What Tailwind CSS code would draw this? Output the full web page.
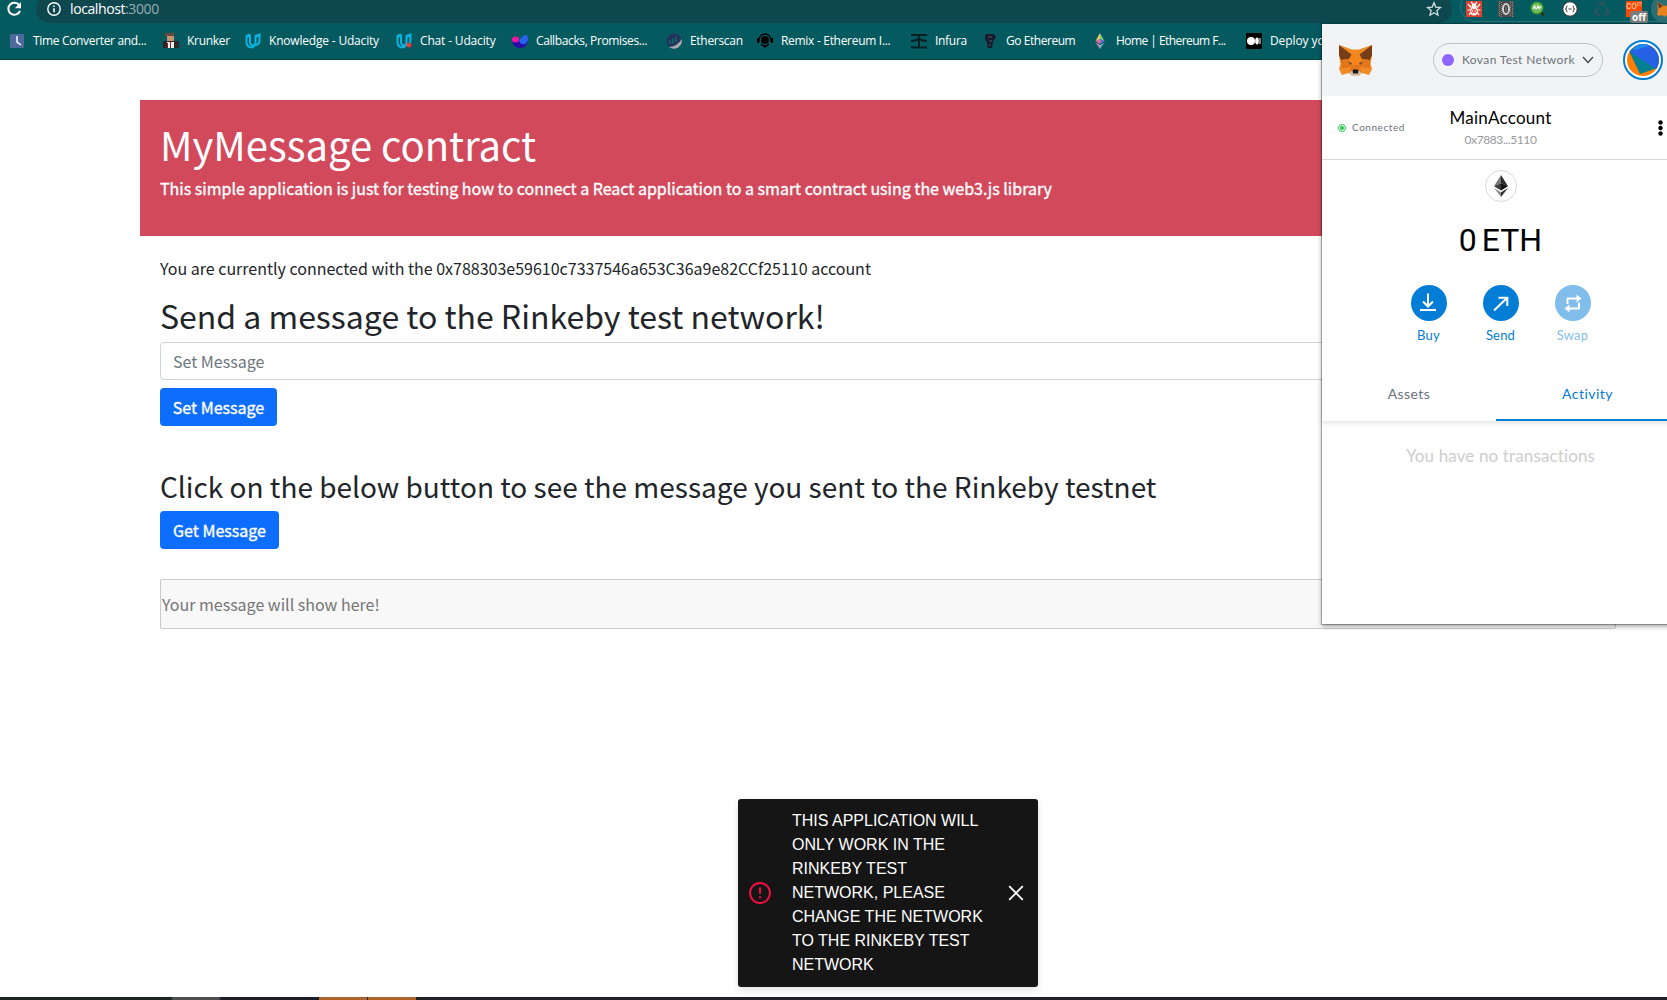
<!DOCTYPE html>
<html lang="en">
<head>
<meta charset="utf-8">
<title>MyMessage contract</title>
<script src="https://cdn.jsdelivr.net/npm/@tailwindcss/browser@4"></script>
</head>
<body class="bg-white">
<div class="relative w-[1667px] h-[1000px] overflow-hidden flex flex-col font-['Noto_Sans_CJK_SC',sans-serif] text-[#212529]">

  <!-- Address bar -->
  <header class="h-[23px] shrink-0 bg-[#055a60] flex items-start overflow-hidden">
    <svg class="w-9 h-[23px] shrink-0" viewBox="0 0 36 23" fill="none"><path d="M19.2 5.2A6 6 0 1 0 20 10.8" stroke="#fff" stroke-width="2"/><path d="M21 2v6.2h-6.2z" fill="#fff"/></svg>
    <div class="w-[1416px] h-7 -mt-[5px] rounded-full bg-[#0f474e] flex items-center pl-[11px] pr-[10px] shrink-0">
      <svg class="w-[14px] h-[14px]" viewBox="0 0 14 14" fill="none" stroke="#fff"><circle cx="7" cy="7" r="6.2" stroke-width="1.4"/><path d="M7 6.2v4M7 3.4v1.5" stroke-width="1.6"/></svg>
      <span class="ml-[9px] text-[14px] leading-5 font-['Open_Sans',sans-serif] text-white whitespace-nowrap tracking-[-0.4px]">localhost<span class="text-[#93adb0]">:3000</span></span>
      <svg class="ml-auto w-[16px] h-[16px]" viewBox="0 0 16 16" fill="none" stroke="#d5e0e1" stroke-width="1.3"><path d="M8 1.8l1.8 4.3 4.7.4-3.6 3.1 1.1 4.6L8 11.8l-4 2.4 1.1-4.6L1.500 6.500l4.700-.4z"/></svg>
    </div>
    <div class="ml-2 -mt-[8px] w-[260px] h-[30px] shrink-0 rounded-full border border-[#2a747a] flex items-start pt-[8px] pl-[5px]">
      <svg class="w-4 h-4 shrink-0" viewBox="0 0 16 16"><rect width="16" height="16" fill="#e0402f"/><g fill="none" stroke="#fff" stroke-width="1.200"><path d="M2 3l3 3.500M1.500 9h3M3 14l2-3M14 3l-3 3.500M14.500 9h-3M13 14l-2-3M5 1l2 2M11 1L9 3"/></g><circle cx="8" cy="5" r="2.500" fill="#fff"/><ellipse cx="8" cy="10" rx="4" ry="4.500" fill="#fff"/><g fill="none" stroke="#e0402f" stroke-width=".9"><ellipse cx="8" cy="10" rx="3" ry="1.300"/><path d="M6.500 7.500l3 5M9.500 7.500l-3 5"/></g></svg>
      <svg class="ml-4 w-4 h-4 shrink-0" viewBox="0 0 16 16"><rect width="16" height="16" fill="#4c4c4c"/><path d="M1.500 0v16M3.500 1v15M12.500 0v16M14.500 1v15" stroke="#8b8b8b" stroke-dasharray="1 1"/><ellipse cx="8" cy="8" rx="3" ry="5" fill="#333" stroke="#d0d0d0" stroke-width="2"/><path d="M8 5.500v5" stroke="#aaa"/></svg>
      <svg class="ml-4 w-4 h-4 shrink-0" viewBox="0 0 16 16"><path d="M10 10l4 4.500" stroke="#1d3a25" stroke-width="3"/><circle cx="7" cy="7" r="6.500" fill="#3f9d2f"/><circle cx="7" cy="7" r="5" fill="#75bd62"/><path d="M3 8l1.500-3L6 8M6.500 8L8 5l1.500 3M11.500 5.500q-2 0-1.500 2" fill="none" stroke="#fff" stroke-width="1.100"/></svg>
      <svg class="ml-4 w-4 h-4 shrink-0" viewBox="0 0 16 16"><circle cx="8" cy="8" r="7.200" fill="#fff" stroke="#333"/><path d="M5.500 5q-1.300 0-1.100 1.500T3.300 8q1.300 0 1.100 1.500T5.500 11M10.500 5q1.300 0 1.100 1.500T12.700 8q-1.300 0-1.100 1.500T10.500 11M6.500 8h3" fill="none" stroke="#222" stroke-width=".9"/></svg>
      <svg class="ml-4 w-4 h-4 shrink-0" viewBox="0 0 16 16" fill="none" stroke="#2f5560" stroke-width="2.200"><path d="M5 4.500L8 1l3 4M12.500 7l2 4-2 2.500H9.500M6.500 13.500H3L1.500 11l2-4"/></svg>
      <div class="relative ml-4 w-4 h-4 shrink-0">
        <div class="w-4 h-4 bg-[#ff4a00] overflow-hidden text-[10px] leading-[10px] text-[#ffc7ad] font-['Roboto',sans-serif]">co<sup class="text-[7px]">m</sup></div>
        <div class="absolute left-[4px] top-[10px] w-[18px] h-[12px] rounded-[2px] bg-[#7c7c7c] text-white text-[10px] leading-[12px] font-bold text-center font-['Open_Sans',sans-serif]">off</div>
      </div>
      <div class="ml-[9px] -mt-[6px] w-7 h-7 shrink-0 rounded-full bg-[#2c6e73] flex items-center pl-[6px]">
        <svg class="w-4 h-4" viewBox="0 0 34 32"><path d="M1 1l13 8h6l13-8-2 12-1 7 2 5-3 6-8-2-3 3h-4l-3-3-8 2-3-6 2-5-1-7z" fill="#e8821e"/><path d="M1 1l12 9-9 5z" fill="#763d16"/></svg>
      </div>
    </div>
  </header>

  <!-- Bookmarks -->
  <nav class="h-[37px] shrink-0 bg-[#055a60] border-b border-[#04464b] pl-[9px] flex items-center text-white text-[12px] leading-4 font-['Open_Sans',sans-serif] whitespace-nowrap [&>div]:flex [&>div]:items-center [&>div]:gap-2 [&>div]:shrink-0 [&_svg]:w-4 [&_svg]:h-4 [&_svg]:shrink-0">
    <div class="w-[154px]"><svg viewBox="0 0 16 16"><rect x="1" y="1" width="14" height="14" rx="1" fill="#4c6a9b"/><path d="M8 3v6l4 3" fill="none" stroke="#fff" stroke-width="1.500"/></svg><span class="tracking-[-0.33px]">Time Converter and...</span></div>
    <div class="w-[82px]"><svg viewBox="0 0 16 16"><path d="M2 0h9v3H2z" fill="#6b4a3c"/><path d="M4 3h7v5H4z" fill="#c69472"/><path d="M0 8h16v7H0z" fill="#2c2728"/><path d="M4 9h7v6H4z" fill="#eee"/><path d="M7 9h1v6H7zM4 10h1v5H4z" fill="#8d2020"/></svg><span class="tracking-[-0.3px]">Krunker</span></div>
    <div class="w-[151px]"><svg viewBox="0 0 16 16" fill="none" stroke="#0bb3e0" stroke-width="2"><path d="M5 1.500L1.500 3v6q0 5 4.500 5.500 2.500 0 3.500-2M5 1.500V9q0 3.500 4 3.500 5.500-.5 5.500-5.500V1.500L10.500 3v6q0 3-2.500 5"/></svg><span class="tracking-[-0.19px]">Knowledge - Udacity</span></div>
    <div class="w-[116px]"><svg viewBox="0 0 16 16" fill="none" stroke="#0bb3e0" stroke-width="2"><path d="M5 1.500L1.500 3v6q0 5 4.500 5.500 2.500 0 3.500-2M5 1.500V9q0 3.500 4 3.500 5.500-.5 5.500-5.500V1.500L10.500 3v6q0 3-2.500 5"/><circle cx="13" cy="12" r="2.500" fill="#e53b35" stroke="none"/></svg><span class="tracking-[-0.16px]">Chat - Udacity</span></div>
    <div class="w-[154px]"><svg viewBox="0 0 16 16"><path d="M0 7h16q-1 8-8 8T0 7z" fill="#2809a6"/><ellipse cx="3.500" cy="6.500" rx="3.500" ry="3" fill="#f5129c"/><path d="M7 8q4-7 8-6 3 6-2 9-4 1-6-3z" fill="#2563eb"/></svg><span class="tracking-[-0.38px]">Callbacks, Promises...</span></div>
    <div class="w-[91px]"><svg viewBox="0 0 16 16"><circle cx="8" cy="8" r="7.500" fill="#21325b"/><path d="M3 14Q12 13 15.700 6A8 8 0 0 1 3 14z" fill="#a5aab0"/><path d="M4 7v4M7 5v6M10 4v5" stroke="#125b67" stroke-width="2"/></svg><span class="tracking-[-0.3px]">Etherscan</span></div>
    <div class="w-[154px]"><svg viewBox="0 0 16 16"><circle cx="8" cy="7" r="4" fill="#000"/><path d="M2 9V7a6 6 0 0 1 12 0v2M4 11q4 4 8 0" fill="none" stroke="#000" stroke-width="1.300"/><path d="M0 5h2v5H0zM14 5h2v5h-2zM6 12h4l-2 4z"/></svg><span class="tracking-[-0.3px]">Remix - Ethereum I...</span></div>
    <div class="w-[71px]"><svg viewBox="0 0 16 16" fill="none" stroke="#031f22" stroke-width="2"><path d="M0 2h16M0 8q4 0 8-2 4 2 8 2M0 14.500h16M8 2v12"/></svg><span class="tracking-[-0.3px]">Infura</span></div>
    <div class="w-[110px]"><svg viewBox="0 0 16 16"><path d="M4 1l7 0 3 2-1 3-2 2-1 7H6L5 9 3 7V3z" fill="#171a2a"/><path d="M6 4h4M7 8h3M7 12h2" stroke="#555a6b"/></svg><span class="tracking-[-0.45px]">Go Ethereum</span></div>
    <div class="w-[154px]"><svg viewBox="0 0 16 16"><path d="M8 0L3.500 8 8 6z" fill="#e5ca65"/><path d="M8 0v6l4.500 2z" fill="#7fc978"/><path d="M3.500 8L8 6v5z" fill="#e76f91"/><path d="M8 6l4.500 2L8 11z" fill="#7b6ad4"/><path d="M3.500 9.500L8 12v4z" fill="#d58ab6"/><path d="M12.500 9.500L8 12v4z" fill="#5bb5cf"/></svg><span class="tracking-[-0.55px]">Home | Ethereum F...</span></div>
    <div><svg viewBox="0 0 16 16"><rect width="16" height="16" rx="1" fill="#000"/><circle cx="5" cy="8" r="4" fill="#fff"/><ellipse cx="11" cy="8" rx="1.800" ry="3.600" fill="#fff"/><path d="M14 5v6" stroke="#fff"/></svg><span class="tracking-[-0.1px]">Deploy your smart</span></div>
  </nav>

  <!-- Page -->
  <main class="flex-1 pt-10 pl-[140px] pr-8">
    <section class="h-[136px] bg-[#d2495c] px-5 pt-[20px] text-white">
      <h1 class="text-[40px] leading-[48px] font-normal">MyMessage contract</h1>
      <p class="mt-[8px] text-[16px] leading-6 [-webkit-text-stroke:0.35px]">This simple application is just for testing how to connect a React application to a smart contract using the web3.js library</p>
    </section>
    <div class="pl-5 pr-[19px] pt-5">
      <p class="text-[16px] leading-6">You are currently connected with the 0x788303e59610c7337546a653C36a9e82CCf25110 account</p>
      <h2 class="mt-4 text-[32px] leading-[38px] font-normal">Send a message to the Rinkeby test network!</h2>
      <div class="mt-2 h-[38px] rounded border border-[#ced4da] px-3 flex items-center text-[16px] text-[#6c757d]">Set Message</div>
      <button class="mt-2 block h-[38px] w-[117px] rounded bg-[#0d6efd] text-white text-[16px] [-webkit-text-stroke:0.35px]">Set Message</button>
      <h3 class="mt-[43px] text-[28px] leading-[34px] font-normal">Click on the below button to see the message you sent to the Rinkeby testnet</h3>
      <button class="mt-2 block h-[38px] w-[119px] rounded bg-[#0d6efd] text-white text-[16px] [-webkit-text-stroke:0.35px]">Get Message</button>
      <div class="mt-[30px] h-[50px] rounded-[2px] border border-[#cbcbcb] bg-[#f8f8f8] px-px flex items-center text-[16px] text-[#757575]">Your message will show here!</div>
    </div>
  </main>

  <!-- Taskbar -->
  <footer class="h-[3px] shrink-0 bg-[#1f2127] flex">
    <div class="w-[172px] bg-[#1c2323]"></div><div class="w-[48px] bg-[#4b4f50]"></div><div class="w-[99px] bg-[#1d1f29]"></div><div class="w-[48px] bg-[#aa632b]"></div><div class="w-px bg-[#222]"></div><div class="w-[48px] bg-[#aa632b]"></div>
  </footer>

  <!-- Toast -->
  <div class="absolute left-[738px] top-[799px] w-[300px] h-[188px] rounded-[3px] bg-[#151515] shadow-[0_3px_8px_rgba(0,0,0,0.12)] flex items-center text-white font-['Liberation_Sans',sans-serif]">
    <svg class="ml-[9px] w-[26px] h-[26px] shrink-0" viewBox="0 0 24 24" fill="#f70d40"><path d="M11.100 15h1.800v1.800h-1.800zm0-8h1.800v6h-1.800z"/><circle cx="12" cy="12" r="9.200" fill="none" stroke="#f70d40" stroke-width="1.700"/></svg>
    <p class="ml-[19px] w-[204px] text-[16px] leading-6 whitespace-nowrap">THIS APPLICATION WILL<br>ONLY WORK IN THE<br>RINKEBY TEST<br>NETWORK, PLEASE<br>CHANGE THE NETWORK<br>TO THE RINKEBY TEST<br>NETWORK</p>
    <svg class="ml-[12px] w-4 h-4 shrink-0" viewBox="0 0 16 16" stroke="#fff" stroke-width="1.800"><path d="M1.200 1.200l13.600 13.600M14.800 1.200L1.200 14.800"/></svg>
  </div>

  <!-- Wallet popup -->
  <aside class="absolute left-[1322px] top-[24px] w-[357px] h-[600px] bg-white shadow-[0_0_0_1px_rgba(0,0,0,0.25),0_2px_5px_rgba(0,0,0,0.4)] font-['Lato',sans-serif] flex flex-col">
    <div class="h-[72px] shrink-0 bg-[#f2f3f4] flex items-center pl-4">
      <svg class="w-[35px] h-8 shrink-0" viewBox="0 0 35 32">
        <path d="M1 1l13 4.500h7L34 1v10l-1.500 9 1.500 5-3 6-7-2-3 2.500h-7L11 29l-7 2-3-6 1.500-5L1 11z" fill="#f08a24"/>
        <path d="M1 1l12.500 9.500L11 15l-8 1-2-5zM34 1L21.500 10.500 24 15l8 1 2-5z" fill="#763d16"/>
        <path d="M14 9h7l1 14h-9z" fill="#f6851b"/><path d="M3 16l8-1 3 8-11 1zM32 16l-8-1-3 8 11 1z" fill="#e2761b"/>
        <path d="M10 18l4 1-1 2zM25 18l-4 1 1 2z" fill="#5c4434"/>
        <path d="M14.500 23l-3 6 4 2.500h4l4-2.500-3-6z" fill="#d7c1b3"/><path d="M11 29l3.500-8h6L24 29l-4-3h-5z" fill="#e2761b"/><path d="M14.500 26.500l1-1h4l1 1-.5 3h-5z" fill="#161616"/>
      </svg>
      <div class="ml-[60px] h-[34px] w-[170px] shrink-0 rounded-full border border-[#bbc0c5] px-2 flex items-center text-[#6a737d] text-[12px]"><i class="w-3 h-3 rounded-full bg-[#9064ff]"></i><span class="ml-2 whitespace-nowrap tracking-[0.37px]">Kovan Test Network</span>
        <svg class="ml-auto w-3 h-2" viewBox="0 0 12 8" fill="none" stroke="#43484d" stroke-width="1.300"><path d="M1 1l5 5.500L11 1"/></svg></div>
      <svg class="ml-[20px] w-10 h-10 shrink-0" viewBox="0 0 40 40"><defs><clipPath id="avatar"><circle cx="20" cy="20" r="16"/></clipPath></defs><circle cx="20" cy="20" r="19" fill="#fff" stroke="#037dd6" stroke-width="2"/><g clip-path="url(#avatar)"><path d="M0 0h40v40H0z" fill="#ff7d00"/><path d="M6 11L20 0l14 28L17 34z" fill="#018190"/><path d="M7 12L16 3l24 2v25l-7-1z" fill="#2660e5"/><path d="M10 10L18 0l10 5-15 5z" fill="#1f8bf2"/></g></svg>
    </div>
    <div class="h-16 shrink-0 border-b border-[#d2d8dd] grid grid-cols-[84px_189px_84px] items-center">
      <div class="pl-4 flex items-center text-[10px] text-[#6a737d]"><i class="w-2 h-2 rounded-full border border-[#28c54c] p-px"><b class="block w-1 h-1 rounded-full bg-[#28c54c]"></b></i><span class="ml-[6px] tracking-[0.55px]">Connected</span></div>
      <div class="pt-[2px] text-center text-black"><div class="text-[17px] leading-[22px] tracking-[0.25px]">MainAccount</div><div class="text-[12px] leading-[20px] pt-px text-[#989a9b] tracking-[-0.4px]">0x7883...5110</div></div>
      <svg class="ml-[63px] w-[5px] h-4" viewBox="0 0 5 16"><circle cx="2.500" cy="2.500" r="2.200"/><circle cx="2.500" cy="8" r="2.200"/><circle cx="2.500" cy="13.500" r="2.200"/></svg>
    </div>
    <div class="pt-[10px] flex flex-col items-center shrink-0">
      <div class="w-8 h-8 rounded-full border border-[#d6d9dc] flex items-center justify-center"><svg class="w-[14px] h-[22px]" viewBox="0 0 14 22"><path d="M7 0L0 11.300 7 8z" fill="#777"/><path d="M7 0l7 11.300L7 8z" fill="#2b2b2b"/><path d="M0 11.300L7 8v7.500z" fill="#3c3c3b"/><path d="M14 11.300L7 8v7.500z" fill="#111"/><path d="M0 13l7 4.200V22z" fill="#8c8c8c"/><path d="M14 13l-7 4.200V22z" fill="#333"/></svg></div>
      <div class="mt-[16px] text-[32px] leading-[45px] text-black font-['Roboto',sans-serif] [word-spacing:-3px]">0 ETH</div>
      <div class="mt-[22px] flex gap-9 text-[13px] leading-[18px] text-[#037dd6] [&>div]:w-9 [&>div]:flex [&>div]:flex-col [&>div]:items-center [&_svg]:w-9 [&_svg]:h-9 [&_span]:mt-[5px] [&_span]:tracking-[0.2px]">
        <div><svg viewBox="0 0 36 36" fill="none" stroke="#fff" stroke-width="2"><circle cx="18" cy="18" r="18" fill="#037dd6" stroke="none"/><path d="M17 8.500v13M12 16.500l5 5 5-5M9 25h16"/></svg><span>Buy</span></div>
        <div><svg viewBox="0 0 36 36" fill="none" stroke="#fff" stroke-width="2"><circle cx="18" cy="18" r="18" fill="#037dd6" stroke="none"/><path d="M11 25.500L24 13M15.500 12.800H24.300V21"/></svg><span>Send</span></div>
        <div class="opacity-50"><svg viewBox="0 0 36 36" fill="none" stroke="#fff" stroke-width="2"><circle cx="18" cy="18" r="18" fill="#037dd6" stroke="none"/><path d="M12.500 19v-5.500H22M24 17.500v6H14"/><path d="M21.500 9.500l5 4-5 4zM14.500 19.500l-5 4 5 4z" fill="#fff" stroke="none"/></svg><span>Swap</span></div>
      </div>
    </div>
    <div class="mt-[24px] h-[53px] shrink-0 grid grid-cols-[174px_183px] grid-rows-[53px] shadow-[0_3px_4px_rgba(0,0,0,0.09)] text-[14px] text-center leading-[52px] tracking-[0.45px] text-[#6a737d]">
      <div>Assets</div><div class="border-b-2 border-[#037dd6] text-[#037dd6]">Activity</div>
    </div>
    <p class="mt-[23px] text-center text-[17px] leading-6 tracking-[0.13px] text-[#cdcdcd]">You have no transactions</p>
  </aside>
</div>
</body>
</html>
